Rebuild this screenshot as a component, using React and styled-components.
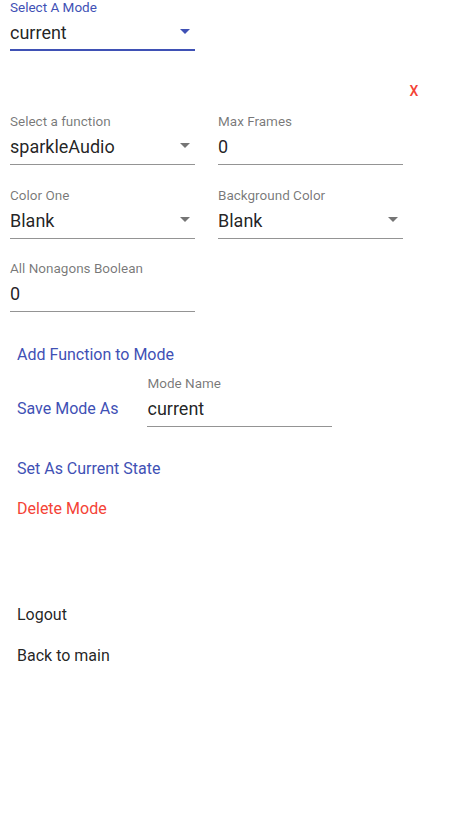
import React from "react";
import styled, { createGlobalStyle } from "styled-components";

const PRIMARY = "#3f51b5";
const DANGER = "#f44336";

const Global = createGlobalStyle`
  html, body { margin: 0; padding: 0; background: #fff; }
  body { font-family: Roboto, "Noto Sans", "Liberation Sans", sans-serif; }
  * { box-sizing: border-box; }
`;

const Page = styled.div`
  width: 460px;
  min-height: 818px;
  padding: 0 0 0 10px;
  display: flex;
  flex-direction: column;
`;

const FieldBox = styled.div`
  width: 185px;
  display: flex;
  flex-direction: column;
`;

const Label = styled.div`
  font-size: 13.5px;
  line-height: 15px;
  height: 15px;
  white-space: nowrap;
  color: ${(p) => (p.$focused ? PRIMARY : "rgba(0,0,0,0.54)")};
`;

const ValueRow = styled.div`
  margin-top: 6px;
  height: 24px;
  display: flex;
  align-items: flex-start;
  justify-content: space-between;
`;

const ValueText = styled.div`
  font-size: 18px;
  line-height: 24px;
  color: rgba(0, 0, 0, 0.87);
  white-space: nowrap;
`;

const ValueInput = styled.input`
  font-family: inherit;
  font-size: 18px;
  line-height: 24px;
  height: 24px;
  width: 100%;
  padding: 0;
  margin: 0;
  border: 0;
  outline: none;
  background: transparent;
  color: rgba(0, 0, 0, 0.87);
`;

const Arrow = styled.svg`
  flex: none;
  width: 24px;
  height: 24px;
  margin-top: -2px;
  margin-right: -2px;
  fill: ${(p) => (p.$focused ? PRIMARY : "rgba(0,0,0,0.54)")};
`;

const Underline = styled.div`
  margin-top: 4px;
  height: 2px;
  ${(p) =>
    p.$focused
      ? `background: ${PRIMARY};`
      : `border-bottom: 1px solid rgba(0,0,0,0.42);`}
`;

const Field = ({ label, value, select, focused, input }) => (
  <FieldBox>
    <Label $focused={focused}>{label}</Label>
    <ValueRow>
      {input ? (
        <ValueInput defaultValue={value} readOnly />
      ) : (
        <ValueText>{value}</ValueText>
      )}
      {select && (
        <Arrow viewBox="0 0 24 24" $focused={focused}>
          <path d="M7 10l5 5 5-5z" />
        </Arrow>
      )}
    </ValueRow>
    <Underline $focused={focused} />
  </FieldBox>
);

const CloseRow = styled.div`
  margin-top: 22px;
  display: flex;
  justify-content: flex-end;
  padding-right: 26px;
`;

const CloseButton = styled.button`
  width: 40px;
  height: 36px;
  border: 0;
  padding: 0;
  background: transparent;
  font-family: inherit;
  font-size: 14px;
  font-weight: 500;
  color: ${DANGER};
  cursor: pointer;
`;

const FieldGrid = styled.div`
  margin-top: 5px;
  display: grid;
  grid-template-columns: 185px 185px;
  column-gap: 23px;
  row-gap: 22.5px;
`;

const Actions = styled.div`
  margin-top: 24.5px;
  display: flex;
  flex-direction: column;
  align-items: flex-start;
`;

const TextButton = styled.button`
  height: 36px;
  padding: 0 7px;
  margin-top: ${(p) => p.$space || 0}px;
  border: 0;
  background: transparent;
  font-family: inherit;
  font-size: 16px;
  line-height: 36px;
  font-weight: 400;
  text-align: left;
  white-space: nowrap;
  cursor: pointer;
  color: ${(p) =>
    p.$tone === "primary"
      ? PRIMARY
      : p.$tone === "danger"
      ? DANGER
      : "rgba(0,0,0,0.87)"};
`;

const SaveRow = styled.div`
  margin-top: 3px;
  display: flex;
  align-items: flex-end;
  gap: 22px;
`;

const Nav = styled.div`
  margin-top: 70px;
  display: flex;
  flex-direction: column;
  align-items: flex-start;
  gap: 5px;
`;

export default function App() {
  return (
    <>
      <Global />
      <Page>
        <Field label="Select A Mode" value="current" select focused />
        <CloseRow>
          <CloseButton>X</CloseButton>
        </CloseRow>
        <FieldGrid>
          <Field label="Select a function" value="sparkleAudio" select />
          <Field label="Max Frames" value="0" input />
          <Field label="Color One" value="Blank" select />
          <Field label="Background Color" value="Blank" select />
          <Field label="All Nonagons Boolean" value="0" input />
        </FieldGrid>
        <Actions>
          <TextButton $tone="primary">Add Function to Mode</TextButton>
          <SaveRow>
            <TextButton $tone="primary">Save Mode As</TextButton>
            <Field label="Mode Name" value="current" input />
          </SaveRow>
          <TextButton $tone="primary" $space={24}>
            Set As Current State
          </TextButton>
          <TextButton $tone="danger" $space={4}>
            Delete Mode
          </TextButton>
        </Actions>
        <Nav>
          <TextButton>Logout</TextButton>
          <TextButton>Back to main</TextButton>
        </Nav>
      </Page>
    </>
  );
}
